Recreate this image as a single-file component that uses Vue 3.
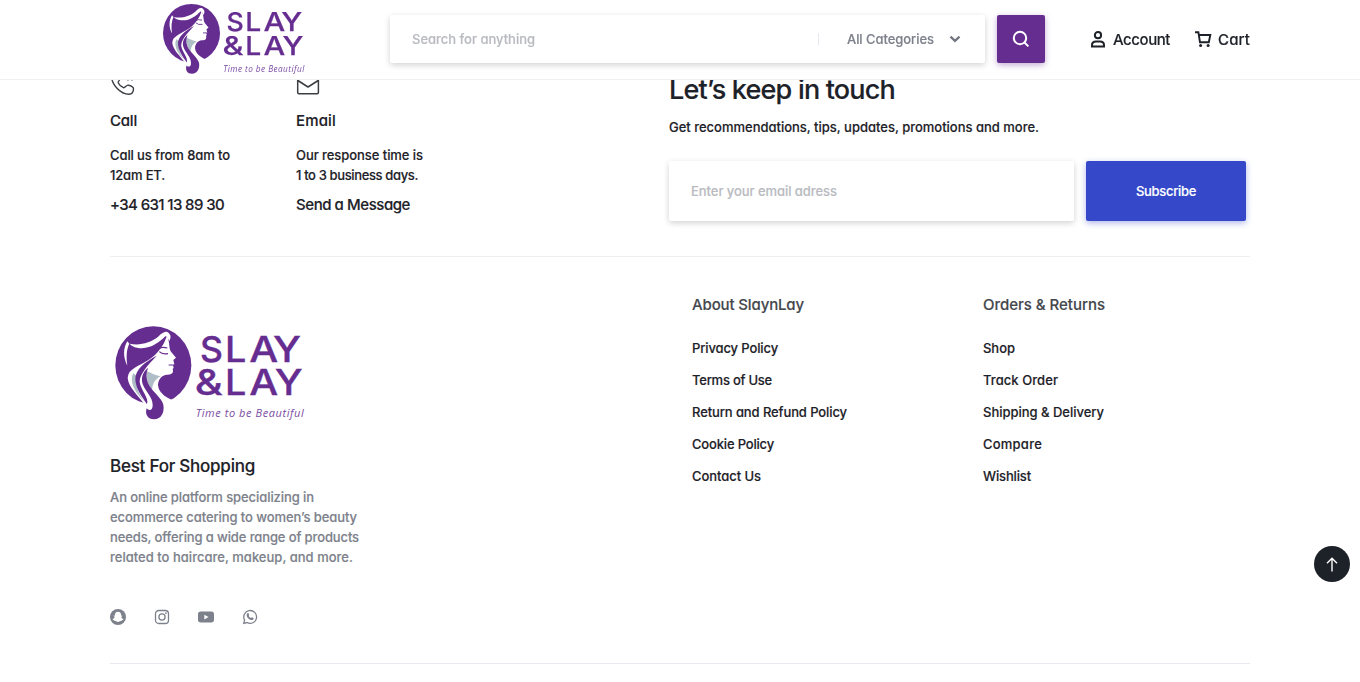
<script setup>
// Adjusts tracking so that a line of text occupies the given measure.
const vFit = {
  mounted(el, { value }) {
    const natural = el.getBoundingClientRect().width
    el.style.letterSpacing = (value - 1 - natural) / el.textContent.length + 'px'
  }
}

// Wordmark letters: glyph, x, baseline, width
const letters = [
  ['S', 300, 142, 69], ['L', 375, 142, 64], ['A', 448, 142, 87], ['Y', 519, 142, 84],
  ['&', 284, 240, 84], ['L', 375, 240, 64], ['A', 448, 240, 87], ['Y', 524, 240, 84]
]

const contacts = [
  { icon: 'phone', title: ['Call', 28], lines: [['Call us from 8am to', 121], ['12am ET.', 56]], link: ['+34 631 13 89 30', 115] },
  { icon: 'mail', title: ['Email', 41], lines: [['Our response time is', 128], ['1 to 3 business days.', 123]], link: ['Send a Message', 115] }
]
const about = [['An online platform specializing in', 205], ['ecommerce catering to women’s beauty', 248], ['needs, offering a wide range of products', 250], ['related to haircare, makeup, and more.', 244]]
const menus = [
  { title: ['About SlaynLay', 113], links: [['Privacy Policy', 87], ['Terms of Use', 81], ['Return and Refund Policy', 156], ['Cookie Policy', 83], ['Contact Us', 70]] },
  { title: ['Orders & Returns', 123], links: [['Shop', 33], ['Track Order', 76], ['Shipping & Delivery', 122], ['Compare', 60], ['Wishlist', 49]] }
]
</script>

<template>
  <div class="page">
    <svg class="defs" width="0" height="0">
      <g id="emblem" transform="translate(36 24)">
        <ellipse cx="124" cy="127" rx="114" ry="117" fill="#662d91" />
        <path d="M165 38C174 55 170 75 177 86L192 104L184 111L187 124L183 128L185 134L182 138C186 150 178 156 165 155C150 156 139 168 138 186C140 206 155 220 180 231L165 250L100 248C80 218 50 195 47 165C50 135 80 125 102 108C130 90 152 75 160 50Z" fill="#fff" />
        <path d="M64 150C52 172 64 205 98 236C80 215 70 190 74 160ZM104 144C120 152 134 158 146 160C130 168 122 180 120 202C108 185 102 165 104 144Z" fill="#afbdc6" />
        <path d="M158 46C148 68 118 92 84 112C68 122 58 134 52 148C72 127 108 117 128 97C145 82 153 65 158 46Z" fill="#662d91" />
        <path d="M134 98C100 116 68 140 70 170C72 200 90 220 105 244C112 225 88 205 83 178C82 155 104 130 134 98Z" fill="#662d91" />
        <path d="M108 134C92 147 86 165 92 183C100 205 122 222 122 246C123 260 112 266 104 256C98 275 108 289 126 289C148 288 158 268 154 245C148 222 118 205 108 180C102 165 102 150 108 134Z" fill="#662d91" />
        <path d="M53 62C80 68 115 62 140 40C150 30 162 20 172 32C178 38 176 46 172 54C167 46 166 40 160 40C140 60 110 82 75 74C65 72 58 68 53 62Z" fill="#fff" />
        <path d="M46 55C34 75 32 100 46 128C42 100 44 78 52 62Z" fill="#fff" />
        <path d="M141 77Q150 70 166 75M142 86Q150 95 168 92M170 126L186 126" fill="none" stroke="#662d91" stroke-width="3.500" />
      </g>
    </svg>

    <header class="header">
      <svg class="header-logo" viewBox="30 15 600 315">
        <use href="#emblem" />
        <text v-for="(l, i) in letters" :key="i" class="wordmark" :x="l[1]" :y="l[2]" :textLength="l[3]" lengthAdjust="spacingAndGlyphs">{{ l[0] }}</text>
        <text class="motto" x="287" y="305" textLength="324">Time to be Beautiful</text>
      </svg>
      <div class="search">
        <span v-fit="124" class="hint">Search for anything</span>
        <span class="categories"><span v-fit="88">All Categories</span></span>
        <svg class="chevron" width="12" height="8" viewBox="0 0 12 8"><path d="M1.500 1.600 6 5.900l4.500-4.300" fill="none" stroke="#71757f" stroke-width="2.200" /></svg>
      </div>
      <button class="search-button" aria-label="Search">
        <svg width="18" height="18" viewBox="0 0 18 18" fill="none" stroke="#fff" stroke-width="2"><circle cx="8" cy="8" r="6.200" /><path d="m12.200 12.200 4.200 4.200" /></svg>
      </button>
      <a class="account">
        <svg width="14" height="17" viewBox="0 0 14 17" fill="none" stroke="#1d2128" stroke-width="2"><circle cx="7" cy="4.200" r="3.100" /><path d="M1 15.400v-1.200c0-2.400 1.700-3.600 4-3.600h4c2.300 0 4 1.200 4 3.600v1.200z" /></svg>
        <span v-fit="58">Account</span>
      </a>
      <a class="cart">
        <svg width="17" height="17" viewBox="0 0 17 17"><path d="M0 1.300h3.400l1.600 10h8.800L15.300 4H3.800" fill="none" stroke="#1d2128" stroke-width="1.900" /><circle cx="5.600" cy="14.600" r="1.500" fill="#1d2128" /><circle cx="13.100" cy="14.600" r="1.500" fill="#1d2128" /></svg>
        <span v-fit="33">Cart</span>
      </a>
    </header>

    <main>
      <section class="top">
        <article v-for="c in contacts" :key="c.icon" class="contact">
          <svg v-if="c.icon === 'phone'" width="25" height="24" viewBox="0 0 25 24" fill="none" stroke="#3b3e43" stroke-width="1.400"><path d="M1.700 5C2 3 5 1 6.500 2.500l3 4c1 2-1.800 2.500-1.300 4.200 1 2.300 3 4 5.300 5 1.800.300 2.700-3 5-2.500 2 .5 5 1.500 5 3.600 0 3-1.500 5.400-4.500 5.400C10 22.200 1.700 12 1.700 5ZM14 5c2.500 0 4 1.500 4 3.500M14 1c5 0 8 3 8 7.500" /></svg>
          <svg v-else width="24" height="24" viewBox="0 0 24 24" fill="none" stroke="#3b3e43" stroke-width="1.500" stroke-linejoin="round"><path d="M1.700 7.500v13q0 1.200 1.200 1.200h18.300q1.200 0 1.200-1.200v-13L12 1ZM1.900 8.500 12 15l10.200-6.500" /></svg>
          <h3><span v-fit="c.title[1]">{{ c.title[0] }}</span></h3>
          <p><span v-for="l in c.lines" :key="l[0]" v-fit="l[1]">{{ l[0] }}</span></p>
          <a><span v-fit="c.link[1]">{{ c.link[0] }}</span></a>
        </article>
        <div class="newsletter">
          <h2><span v-fit="227">Let’s keep in touch</span></h2>
          <p><span v-fit="371">Get recommendations, tips, updates, promotions and more.</span></p>
          <form>
            <div class="email"><span v-fit="147">Enter your email adress</span></div>
            <button type="button" class="subscribe"><span v-fit="61">Subscribe</span></button>
          </form>
        </div>
      </section>

      <section class="bottom">
        <div class="brand">
          <svg class="footer-logo" viewBox="30 15 600 315">
            <use href="#emblem" />
            <text v-for="(l, i) in letters" :key="i" class="wordmark" :x="l[1]" :y="l[2]" :textLength="l[3]" lengthAdjust="spacingAndGlyphs">{{ l[0] }}</text>
            <text class="motto" x="287" y="305" textLength="324">Time to be Beautiful</text>
          </svg>
          <h4><span v-fit="146">Best For Shopping</span></h4>
          <p><span v-for="l in about" :key="l[0]" v-fit="l[1]">{{ l[0] }}</span></p>
          <div class="social">
            <svg viewBox="0 0 16 16"><circle cx="8" cy="8" r="8" fill="#7d818b" /><path d="M8 2.700c2.200 0 3.100 1.500 3.100 3v1l.900-.200c.4 0 .5.600.1.800l-.8.500c.3 1.300 1 2.100 2 2.500.5.300-.3.900-1.400 1-.2.700-.6.700-1.300.600-1 0-1.500 1-2.600 1s-1.600-1-2.600-1c-.7.100-1.100.1-1.300-.6-1.100-.1-1.900-.7-1.400-1 1-.4 1.700-1.200 2-2.500l-.8-.5c-.4-.2-.3-.8.1-.8l.9.200v-1c0-1.500.9-3 3.100-3Z" fill="#fff" /></svg>
            <svg viewBox="0 0 16 16" fill="none" stroke="#7d818b" stroke-width="1.300"><rect x="1.500" y="1.500" width="13" height="13" rx="3.300" /><circle cx="8" cy="8" r="3.100" /><circle cx="11.900" cy="4.100" r=".9" fill="#7d818b" stroke="none" /></svg>
            <svg viewBox="0 0 16 16"><rect y="2.500" width="16" height="11" rx="2.700" fill="#7d818b" /><path d="m6.300 5.700 4.200 2.300-4.200 2.400Z" fill="#fff" /></svg>
            <svg viewBox="0 0 16 16"><path d="m1.700 14.400.9-3.300A6.400 6.400 0 1 1 5 13.500Z" fill="none" stroke="#7d818b" stroke-width="1.300" /><path d="M5.400 4.300c.4-.3 1-.3 1.200.1l.6 1.400c.1.400-.6.900-.5 1.200.5 1 1.300 1.700 2.300 2.100.4.100.7-.9 1.200-.7l1.300.7c.4.300 0 1.400-.5 1.700-2.700 1.300-7.200-2.700-6.200-5.600Z" fill="#7d818b" /></svg>
          </div>
        </div>
        <nav v-for="m in menus" :key="m.title[0]">
          <h5><span v-fit="m.title[1]">{{ m.title[0] }}</span></h5>
          <a v-for="l in m.links" :key="l[0]"><span v-fit="l[1]">{{ l[0] }}</span></a>
        </nav>
      </section>
    </main>
    <button class="to-top" aria-label="Back to top">
      <svg width="12" height="15" viewBox="0 0 12 15" fill="none" stroke="#fff" stroke-width="1.400"><path d="M6 14.500V1.500M1 6.300l5-5 5 5" /></svg>
    </button>
  </div>
</template>

<style>
body { margin: 0; overflow: hidden; background: #fff; }
</style>
<style scoped>
* { box-sizing: border-box; }
.page { height: 682px; overflow: hidden; color: #1d2128; font: 500 13px/20px Inter, "Open Sans", sans-serif; font-feature-settings: "cv11"; -webkit-text-stroke: .15px; }
.defs { position: absolute; }
svg { display: block; flex: none; -webkit-text-stroke: 0; }
h2, h3, h4, h5, p { margin: 0; font-weight: 500; }
span { display: inline-block; white-space: nowrap; }
button { padding: 0; border: 0; font: inherit; font-feature-settings: inherit; color: #fff; display: flex; align-items: center; justify-content: center; }
.wordmark { font: 500 105px Inter, sans-serif; fill: #662d91; stroke: #662d91; stroke-width: 1px; }
.motto { font: italic 400 33px "Open Sans", sans-serif; fill: #7b4ca4; }
.header { position: fixed; z-index: 2; inset: 0 0 auto; height: 80px; display: flex; align-items: flex-start; padding: 0 110px 0 159px; background: #fff; border-bottom: 1px solid #f0f0f1; }
.header-logo { width: 150px; height: 79px; margin-top: -1px; }
.search { flex: none; width: 595px; height: 48px; margin: 15px 12px 0 81px; padding: 0 24px 0 22px; display: flex; align-items: center; border-radius: 2px; background: #fff; box-shadow: 0 2px 6px rgba(0, 0, 0, .18); }
.hint, .email { color: #b9bbc1; }
.categories { display: flex; align-items: center; height: 12px; margin-left: auto; padding-left: 28px; border-left: 1px solid #e8e9f0; color: #7d818b; }
.chevron { margin-left: 15px; }
.search-button { flex: none; width: 48px; height: 48px; margin-top: 15px; border-radius: 2px; background: #662d91; box-shadow: 0 2px 6px rgba(102, 45, 145, .4); }
.account, .cart { height: 78px; display: flex; align-items: center; font-size: 15px; gap: 8px; }
.account span, .cart span { padding-top: 1px; }
.account { margin-left: 46px; }
.cart { margin-left: auto; gap: 6px; }
main { width: 1140px; margin: 0 auto; padding-top: 72px; }
.top { display: flex; height: 185px; border-bottom: 1px solid #efefef; }
.contact { flex: none; width: 186px; }
.contact h3 { margin-top: 15px; font-size: 15px; line-height: 20px; }
.contact p { display: flex; flex-direction: column; align-items: flex-start; margin: 14px 0 10px; }
.contact a { display: block; font-size: 15px; }
.newsletter { margin-left: 187px; }
.newsletter h2 { font-size: 27px; line-height: 36px; }
.newsletter p { margin: 9px 0 24px; }
form { display: flex; gap: 12px; }
.email { width: 405px; height: 60px; padding: 0 22px; display: flex; align-items: center; border-radius: 2px; box-shadow: 0 2px 6px rgba(0, 0, 0, .18); }
.subscribe { width: 160px; height: 60px; border-radius: 2px; background: #3448c9; box-shadow: 0 2px 6px rgba(52, 72, 201, .4); }
.bottom { display: flex; height: 407px; padding-top: 38px; border-bottom: 1px solid #e8eaf2; }
.brand { flex: none; width: 582px; padding-top: 25px; }
.footer-logo { width: 200px; height: 105px; }
.brand h4 { margin-top: 30px; font-size: 17px; line-height: 22px; }
.brand p { display: flex; flex-direction: column; align-items: flex-start; margin-top: 10px; color: #7d818b; }
.social { display: flex; gap: 28px; margin-top: 42px; }
.social svg { width: 16px; height: 16px; }
nav { flex: none; width: 291px; }
nav h5 { margin-bottom: 23px; font-size: 15px; line-height: 20px; color: #44474d; }
nav a { display: block; margin-bottom: 12px; }
.to-top { position: fixed; right: 10px; top: 546px; width: 36px; height: 36px; border-radius: 50%; background: #1d2128; }
</style>
